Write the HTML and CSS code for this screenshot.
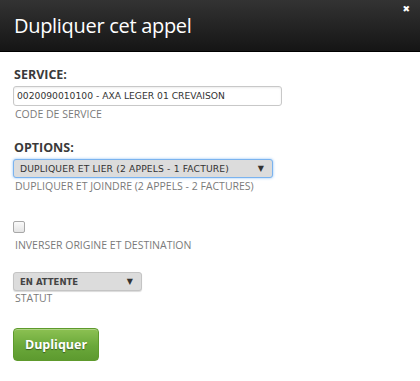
FILE: index.html
```html
<!DOCTYPE html>
<html lang="fr">
<head>
    <meta charset="UTF-8">
    <title>Dupliquer cet appel</title>
    <link rel="stylesheet" href="styles.css">
</head>
<body>
    <div class="modal">
        <div class="modal-header">
            <h1>Dupliquer cet appel</h1>
            <span class="close">&#x2716;</span>
        </div>

        <div class="modal-body">
            <div class="field">
                <div class="field-title">SERVICE:</div>
                <div class="text-input">0020090010100 - AXA LEGER 01 CREVAISON</div>
                <div class="hint">CODE DE SERVICE</div>
            </div>

            <div class="field">
                <div class="field-title">OPTIONS:</div>
                <div class="select select-wide focused">
                    <span>DUPLIQUER ET LIER (2 APPELS - 1 FACTURE)</span>
                    <span class="arrow">&#9660;</span>
                </div>
                <div class="hint">DUPLIQUER ET JOINDRE (2 APPELS - 2 FACTURES)</div>
            </div>

            <div class="field field-check">
                <div class="checkbox"></div>
                <div class="hint">INVERSER ORIGINE ET DESTINATION</div>
            </div>

            <div class="field field-status">
                <div class="select select-small">
                    <span>EN ATTENTE</span>
                    <span class="arrow">&#9660;</span>
                </div>
                <div class="hint">STATUT</div>
            </div>

            <button class="submit-button">Dupliquer</button>
        </div>
    </div>
</body>
</html>
```

FILE: styles.css
```css
* {
    margin: 0;
    padding: 0;
    box-sizing: border-box;
}

body {
    background: #fff;
    font-family: 'Open Sans', 'DejaVu Sans', sans-serif;
}

.modal {
    width: 420px;
    height: 381px;
    background: #fff;
}

/* Header */
.modal-header {
    height: 52px;
    background: linear-gradient(180deg, #333333 0%, #151515 100%);
    border-bottom: 1px solid #000;
    position: relative;
    padding: 12px 14px 0;
}

.modal-header h1 {
    color: #fff;
    font-size: 20px;
    font-weight: normal;
    letter-spacing: -0.3px;
}

.close {
    position: absolute;
    top: 4px;
    right: 10px;
    color: #fff;
    font-size: 9px;
    font-family: 'DejaVu Sans', sans-serif;
}

/* Body */
.modal-body {
    padding: 14px 13px 0;
}

.field {
    margin-bottom: 18px;
}

.field-title {
    font-size: 12.5px;
    font-weight: bold;
    color: #3a3a3a;
    margin-bottom: 3px;
    padding-left: 1px;
}

.text-input {
    width: 269px;
    height: 20px;
    border: 1px solid #c8c8c8;
    border-radius: 3px;
    box-shadow: inset 0 1px 2px rgba(0, 0, 0, 0.08);
    font-family: 'DejaVu Sans', sans-serif;
    font-size: 9.2px;
    color: #333;
    padding: 3px 0 0 3px;
}

.hint {
    font-size: 10.5px;
    color: #7a7a7a;
    margin-top: 1px;
    padding-left: 2px;
}

.select {
    height: 19px;
    background: #dcdcdc;
    border: 1px solid #c4c4c4;
    border-radius: 3px;
    display: flex;
    justify-content: space-between;
    align-items: center;
    font-family: 'DejaVu Sans', sans-serif;
    font-size: 9.2px;
    color: #333;
    padding: 0 8px 0 6px;
}

.select-wide {
    width: 260px;
}

.select-wide span:first-child {
    letter-spacing: 0.15px;
}

.select-small {
    width: 129px;
    box-shadow: 0 1px 1px rgba(0, 0, 0, 0.15);
    font-size: 8.5px;
}

.select-small span:first-child {
    font-weight: bold;
    color: #444;
}

.select.focused {
    border-color: #7ab3ef;
    box-shadow: 0 0 3px #8fc0f5;
}

.arrow {
    font-size: 8px;
    color: #333;
}

.field-check {
    margin-top: 28px;
    margin-bottom: 20px;
}

.checkbox {
    width: 12px;
    height: 12px;
    border: 1px solid #a8a8a8;
    border-radius: 2px;
    background: linear-gradient(180deg, #fafafa 0%, #e4e4e4 100%);
    margin-bottom: 5px;
}

.field-status {
    margin-bottom: 23px;
}

.field-status .hint {
    margin-top: 0;
}

.submit-button {
    width: 86px;
    height: 33px;
    border: 1px solid #5e9a2c;
    border-radius: 4px;
    background: linear-gradient(180deg, #8cc152 0%, #6aa83a 55%, #5d9a2f 100%);
    color: #fff;
    font-family: 'Open Sans', 'DejaVu Sans', sans-serif;
    font-size: 12.5px;
    font-weight: bold;
    text-shadow: 0 1px 1px rgba(0, 0, 0, 0.45);
    box-shadow: inset 0 1px 0 rgba(255, 255, 255, 0.3);
    cursor: pointer;
}
```
